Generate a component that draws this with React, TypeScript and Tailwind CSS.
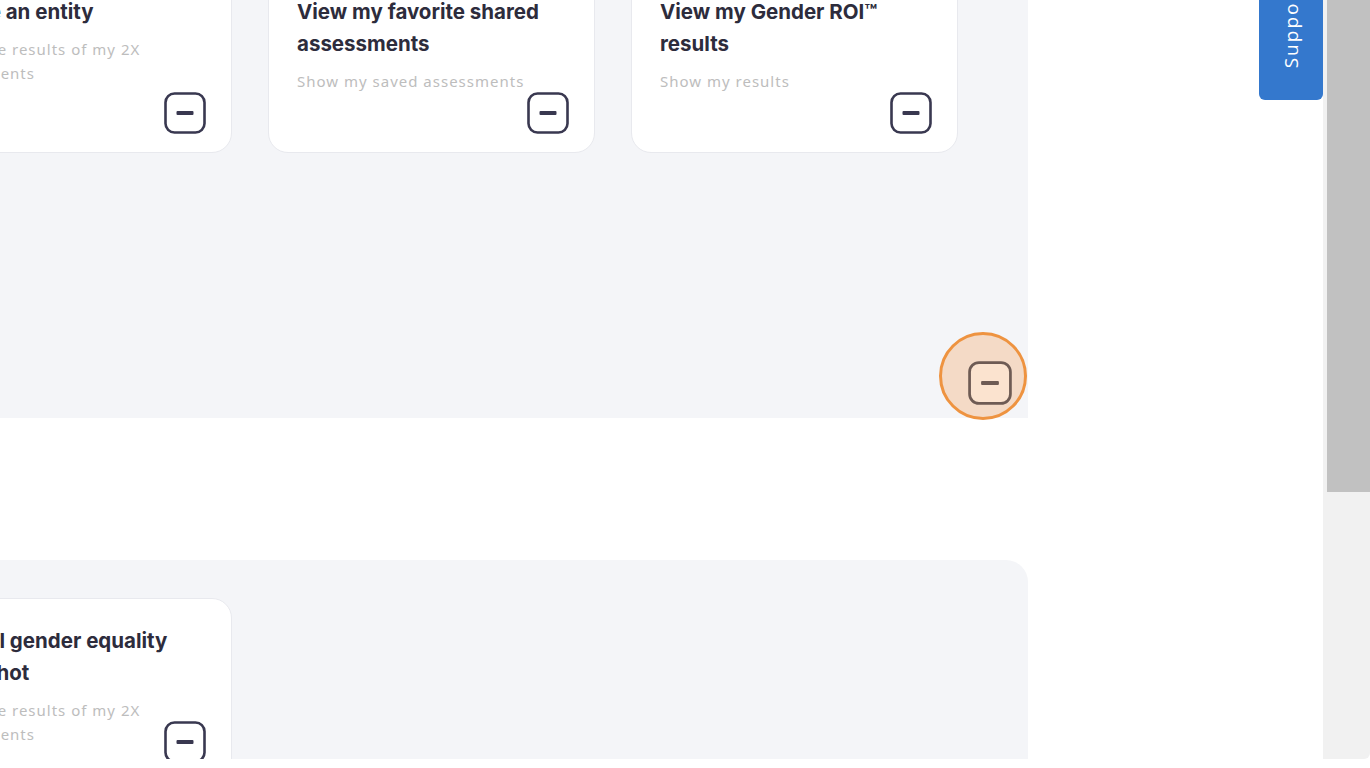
import React from "react";

function MinusBox({ stroke = "#393850", fill = "none", size = 42 }: { stroke?: string; fill?: string; size?: number }) {
  return (
    <svg width={size} height={size} viewBox="0 0 42 42" fill="none">
      <rect x="1.5" y="1.5" width="39" height="39" rx="9" stroke={stroke} strokeWidth="2.6" fill={fill} />
      <rect x="12.5" y="19" width="17" height="4" rx="1" fill={stroke} />
    </svg>
  );
}

type CardProps = { title: React.ReactNode; subtitle: React.ReactNode };

function Card({ title, subtitle }: CardProps) {
  return (
    <div className="relative w-[327px] h-[184px] shrink-0 bg-white border border-[#e8e9ee] rounded-[20px] pt-[26px] pl-7 pr-[26px]">
      <div className="text-[20.5px] leading-[32px] font-bold text-[#2d2c3c] [font-family:Inter,'Noto_Sans',sans-serif]">
        {title}
      </div>
      <div className="mt-[9px] text-[15px] leading-[24px] text-[#bdbdbd] [font-family:'Noto_Sans',sans-serif] tracking-[1px]">
        {subtitle}
      </div>
      <div className="absolute right-[25px] bottom-[18px]">
        <MinusBox />
      </div>
    </div>
  );
}

export default function App() {
  return (
    <div className="w-full h-[768px] bg-white overflow-hidden">
      <div className="flex h-[759px]">
        <div className="w-[1028px] shrink-0 flex flex-col">
          <section className="relative h-[418px] bg-[#f4f5f8]">
            <div className="flex gap-[36px] ml-[-95px] mt-[-31px]">
              <Card
                title={<span className="whitespace-nowrap">Create an entity</span>}
                subtitle={<span className="whitespace-nowrap">Show the results of my 2X<br />assessments</span>}
              />
              <Card title="View my favorite shared assessments" subtitle="Show my saved assessments" />
              <Card title="View my Gender ROI™ results" subtitle="Show my results" />
            </div>
            <div className="absolute left-[939px] top-[332px] w-[88px] h-[88px] rounded-full border-[3px] border-[#ee9340] bg-[#f4dac6] flex items-center justify-center">
              <div className="ml-[14px] mt-[14px]">
                <MinusBox stroke="#6e5b54" fill="#fbe3cf" size={44} />
              </div>
            </div>
          </section>
          <div className="h-[142px] shrink-0" />
          <section className="flex-1 bg-[#f4f5f8] rounded-tr-[22px] overflow-hidden pt-[38px]">
            <div className="flex ml-[-95px]">
              <Card
                title={<span className="whitespace-nowrap">Overall gender equality<br />Snapshot</span>}
                subtitle={<span className="whitespace-nowrap">Show the results of my 2X<br />assessments</span>}
              />
            </div>
          </section>
        </div>
        <div className="w-[295px] shrink-0 flex justify-end items-start">
          <div className="w-[64px] h-[140px] mt-[-40px] bg-[#3478cd] rounded-b-[6px] flex flex-col items-center justify-end pb-[32px]">
            <span className="text-white text-[19px] tracking-[2px] [font-family:'Open_Sans',sans-serif] [writing-mode:vertical-rl] rotate-180">
              Support
            </span>
          </div>
        </div>
        <div className="flex-1 bg-[#f1f1f1] rounded-br-[6px] pl-[4px]">
          <div className="h-[492px] bg-[#c1c1c1]" />
        </div>
      </div>
    </div>
  );
}
